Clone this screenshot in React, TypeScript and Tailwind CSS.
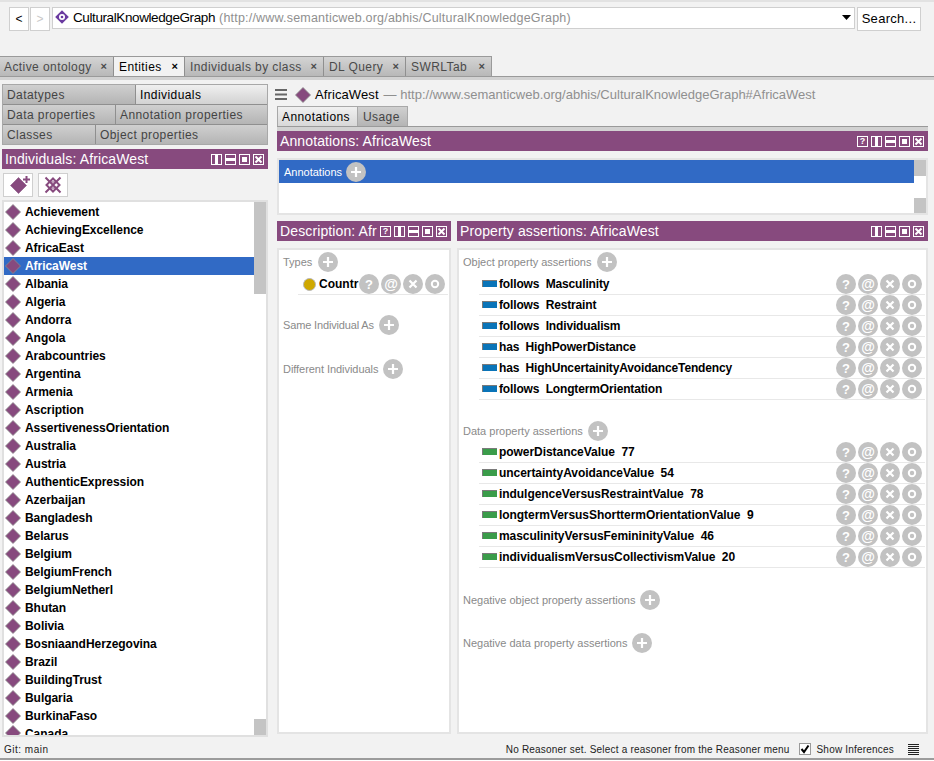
import React from "react";

const P = "#874a7e";

function Diamond({ size = 16, stroke = "#8c8c8c" }: { size?: number; stroke?: string }) {
  return (
    <svg width={size} height={size} viewBox="0 0 16 16" className="shrink-0">
      <path d="M8 .5 15.5 8 8 15.5 .5 8Z" fill={P} stroke={stroke} strokeWidth="0.8" />
    </svg>
  );
}

function WinIcons({ help = true }: { help?: boolean }) {
  const c = "w-[11px] h-[11px] border border-white shrink-0";
  return (
    <div className="flex items-center gap-[3px] shrink-0">
      {help && (
        <div className={c + " flex items-center justify-center text-white text-[9px] font-bold leading-none"}>?</div>
      )}
      <div className={c + " flex justify-center"}>
        <div className="w-[3px] h-full bg-white" />
      </div>
      <div className={c + " flex items-center"}>
        <div className="h-[3px] w-full bg-white" />
      </div>
      <div className={c + " flex items-center justify-center"}>
        <div className="w-[5px] h-[5px] bg-white" />
      </div>
      <div className={c + " flex items-center justify-center"}>
        <svg width="9" height="9" viewBox="0 0 9 9">
          <path d="M1.5 1.5 7.5 7.5M7.5 1.5 1.5 7.5" stroke="#fff" strokeWidth="2" />
        </svg>
      </div>
    </div>
  );
}

function ViewHeader({ title, help = true, className = "" }: { title: string; help?: boolean; className?: string }) {
  return (
    <div className={"h-[20px] bg-[#874a7e] flex items-center justify-between pl-[3px] pr-[4px] shrink-0 " + className}>
      <span className="text-white text-[14px] leading-none whitespace-nowrap tracking-[0.12px]">{title}</span>
      <WinIcons help={help} />
    </div>
  );
}

function Plus() {
  return (
    <div className="w-[20px] h-[20px] rounded-full bg-[#c2c2c2] flex items-center justify-center shrink-0">
      <svg width="12" height="12" viewBox="0 0 12 12">
        <path d="M6 1v10M1 6h10" stroke="#fff" strokeWidth="2.2" />
      </svg>
    </div>
  );
}

function Circle({ children }: { children: React.ReactNode }) {
  return (
    <div className="w-[20px] h-[20px] rounded-full bg-[#c2c2c2] flex items-center justify-center shrink-0 text-white font-bold text-[13px] leading-none">
      {children}
    </div>
  );
}

function Actions() {
  return (
    <div className="flex gap-[2px] shrink-0">
      <Circle>?</Circle>
      <Circle>
        <span className="text-[14px] font-bold">@</span>
      </Circle>
      <Circle>
        <svg width="10" height="10" viewBox="0 0 10 10">
          <path d="M1.5 1.5 8.5 8.5M8.5 1.5 1.5 8.5" stroke="#fff" strokeWidth="2.2" />
        </svg>
      </Circle>
      <Circle>
        <svg width="10" height="10" viewBox="0 0 10 10">
          <circle cx="5" cy="5" r="3.2" fill="none" stroke="#fff" strokeWidth="2" />
        </svg>
      </Circle>
    </div>
  );
}

function Label({
  text,
  className = "",
  textClass = "",
  gap = "gap-[5px]",
}: {
  text: string;
  className?: string;
  textClass?: string;
  gap?: string;
}) {
  return (
    <div className={"h-[20px] flex items-center pl-[4px] " + gap + " " + className}>
      <span className={"text-[11px] text-[#8a8a8a] whitespace-nowrap " + textClass}>{text}</span>
      <Plus />
    </div>
  );
}

function AssertRow({ color, parts, track }: { color: string; parts: string; track: string }) {
  return (
    <div className="h-[21px] ml-[20px] mr-[1px] border-b border-[#e8e8e8] flex items-center pl-[3px] pr-[3px]">
      <div
        className="w-[15px] h-[7px] -mt-[2px] border-l-[1px] border-t-[1px] border-[#7a7a7a] mr-[2px] shrink-0"
        style={{ backgroundColor: color }}
      />
      <span className={"flex-1 text-[12px] font-bold text-black whitespace-pre " + track}>{parts}</span>
      <Actions />
    </div>
  );
}

const tabs: [string, boolean, string][] = [
  ["Active ontology", false, "w-[114px]"],
  ["Entities", true, "w-[71px]"],
  ["Individuals by class", false, "w-[139px]"],
  ["DL Query", false, "w-[82px]"],
  ["SWRLTab", false, "w-[85px]"],
];

const names = [
  "Achievement", "AchievingExcellence", "AfricaEast", "AfricaWest", "Albania", "Algeria", "Andorra", "Angola",
  "Arabcountries", "Argentina", "Armenia", "Ascription", "AssertivenessOrientation", "Australia", "Austria",
  "AuthenticExpression", "Azerbaijan", "Bangladesh", "Belarus", "Belgium", "BelgiumFrench", "BelgiumNetherl",
  "Bhutan", "Bolivia", "BosniaandHerzegovina", "Brazil", "BuildingTrust", "Bulgaria", "BurkinaFaso",
];

const objs = [
  "follows  Masculinity", "follows  Restraint", "follows  Individualism", "has  HighPowerDistance",
  "has  HighUncertainityAvoidanceTendency", "follows  LongtermOrientation",
];
const datas = [
  "powerDistanceValue  77", "uncertaintyAvoidanceValue  54", "indulgenceVersusRestraintValue  78",
  "longtermVersusShorttermOrientationValue  9", "masculinityVersusFemininityValue  46",
  "individualismVersusCollectivismValue  20",
];

function SubTab({ text, active, className = "" }: { text: string; active?: boolean; className?: string }) {
  return (
    <div
      className={
        "h-full flex items-center pl-[4px] text-[12px] tracking-[0.42px] border-r border-[#8f8f8f] last:border-r-0 " +
        (active
          ? "bg-gradient-to-b from-[#f0f0f0] to-[#d2d2d2] text-black "
          : "bg-gradient-to-b from-[#d0d0d0] to-[#b4b4b4] text-[#444] ") +
        className
      }
    >
      {text}
    </div>
  );
}

export default function App() {
  return (
    <div
      className="w-[934px] h-[761px] bg-[#f2f2f2] overflow-hidden flex flex-col relative"
      style={{ fontFamily: '"Liberation Sans", Arial, sans-serif' }}
    >
      <div className="h-[2px] bg-[#e2e2e2] shrink-0" />
      {/* top bar */}
      <div className="h-[54px] shrink-0 pt-[5px] pl-[9px] pr-[13px] flex items-start">
        <div className="w-[20px] h-[24px] bg-white border border-[#cfcfcf] flex items-center justify-center text-[12px] text-black">&lt;</div>
        <div className="w-[20px] h-[24px] ml-[1px] bg-white border border-[#cfcfcf] flex items-center justify-center text-[12px] text-[#c8c8c8]">&gt;</div>
        <div className="ml-[2px] flex-1 h-[22px] bg-white border border-[#cfcfcf] flex items-center pl-[2px] pr-[1px]">
          <svg width="14" height="14" viewBox="0 0 14 14" className="mr-[4px] shrink-0 -mt-[2px]">
            <path d="M7 .2 13.8 7 7 13.8 .2 7Z" fill="#6a3aa0" />
            <circle cx="7" cy="7" r="3" fill="#fff" />
            <circle cx="7" cy="7" r="1.3" fill="#6a3aa0" />
          </svg>
          <span className="text-[13.5px] text-black whitespace-nowrap tracking-[-0.4px]">CulturalKnowledgeGraph</span>
          <span className="text-[12.5px] text-[#8f8f8f] whitespace-nowrap ml-[4px] tracking-[0.2px]">
            (http://www.semanticweb.org/abhis/CulturalKnowledgeGraph)
          </span>
          <svg width="9" height="5" viewBox="0 0 9 5" className="ml-auto mr-[2px] -mt-[2px]">
            <path d="M0 0h9L4.5 5Z" fill="#000" />
          </svg>
        </div>
        <div className="ml-[2px] w-[64px] h-[24px] bg-white border border-[#cfcfcf] flex items-center justify-center text-[13px] tracking-[0.3px] text-black">
          Search...
        </div>
      </div>
      {/* tabs */}
      <div className="h-[20px] shrink-0 flex items-stretch">
        <div className="flex items-stretch w-[492px] border-t border-r border-[#9a9a9a]">
          {tabs.map(([t, active, w]) => (
            <div
              key={t}
              className={
                "flex items-center justify-between pl-[5px] first:pl-[4px] pr-[6px] border-r border-[#8f8f8f] last:border-r-0 " +
                w +
                (active
                  ? " bg-[#f2f2f2] text-black"
                  : " bg-gradient-to-b from-[#d4d4d4] to-[#b8b8b8] text-[#4a4a4a]")
              }
            >
              <span className="text-[12px] tracking-[0.42px] whitespace-nowrap">{t}</span>
              <span className="text-[11px] font-bold leading-none">×</span>
            </div>
          ))}
        </div>
      </div>
      <div className="h-[4px] shrink-0 bg-[#d2d2d2] border-t border-[#9a9a9a]" />
      {/* main */}
      <div className="flex flex-1 min-h-0 pl-[2px]">
        {/* left */}
        <div className="w-[266px] shrink-0 pt-[4px] flex flex-col">
          <div className="border border-[#a8a8a8] flex flex-col h-[61px] shrink-0">
            <div className="flex h-[20px] border-b border-[#8f8f8f]">
              <SubTab text="Datatypes" className="w-[133px]" />
              <SubTab text="Individuals" active className="flex-1" />
            </div>
            <div className="flex h-[20px] border-b border-[#8f8f8f]">
              <SubTab text="Data properties" className="w-[113px]" />
              <SubTab text="Annotation properties" className="flex-1" />
            </div>
            <div className="flex flex-1">
              <SubTab text="Classes" className="w-[93px]" />
              <SubTab text="Object properties" className="flex-1" />
            </div>
          </div>
          <ViewHeader title="Individuals: AfricaWest" help={false} className="mt-[4px]" />
          <div className="h-[31px] shrink-0 flex items-start pt-[4px] pl-[1px] gap-[5px]">
            <div className="w-[30px] h-[24px] bg-white border border-[#cfcfcf] flex items-center justify-center relative">
              <Diamond size={17} stroke="#9a6a93" />
              <svg width="7" height="7" viewBox="0 0 7 7" className="absolute right-[2px] top-[2px]">
                <path d="M3.5 0v7M0 3.5h7" stroke="#874a7e" strokeWidth="2" />
              </svg>
            </div>
            <div className="w-[30px] h-[24px] bg-white border border-[#cfcfcf] flex items-center justify-center">
              <svg width="20" height="20" viewBox="0 0 20 20">
                <path d="M10 3.5 16.5 10 10 16.5 3.5 10Z" fill="#fff" stroke="#874a7e" strokeWidth="2" />
                <path d="M2.5 2.5 17.5 17.5M17.5 2.5 2.5 17.5" stroke="#874a7e" strokeWidth="2" />
                <path d="M7 7H13M7 13H13" stroke="#874a7e" strokeWidth="1" />
              </svg>
            </div>
          </div>
          <div className="h-[537px] shrink-0 bg-white border-2 border-[#e0e0e0] relative overflow-hidden pt-[1px] pr-[12px]">
            {names.map((n) => {
              const sel = n === "AfricaWest";
              return (
                <div
                  key={n}
                  className={
                    "h-[18px] flex items-center pl-[1px] whitespace-nowrap " + (sel ? "bg-[#316ac5] text-white" : "text-black")
                  }
                >
                  <Diamond size={16} />
                  <span className="ml-[4px] text-[12px] font-bold tracking-[-0.05px]">{n}</span>
                </div>
              );
            })}
            <div className="h-[14px] overflow-hidden flex items-start pl-[1px]">
              <Diamond size={16} />
              <span className="ml-[4px] text-[12px] font-bold leading-[18px] tracking-[-0.05px] text-black">Canada</span>
            </div>
            <div className="absolute right-0 top-0 w-[12px] h-[92px] bg-[#c4c4c4]" />
            <div className="absolute right-0 bottom-0 w-[12px] h-[16px] bg-[#c4c4c4]" />
          </div>
        </div>
        {/* right */}
        <div className="ml-[9px] w-[651px] shrink-0 flex flex-col">
          <div className="h-[26px] shrink-0 flex items-center -ml-[2px] pt-[3px]">
            <svg width="12" height="11" viewBox="0 0 12 11" className="shrink-0">
              <path d="M0 1h12M0 5.5h12M0 10h12" stroke="#666" strokeWidth="2" />
            </svg>
            <div className="ml-[8px]">
              <Diamond size={16} />
            </div>
            <span className="ml-[4px] text-[13px] text-black tracking-[0.1px]">AfricaWest</span>
            <span className="ml-[5px] text-[13px] text-[#8f8f8f] whitespace-nowrap">
              — http://www.semanticweb.org/abhis/CulturalKnowledgeGraph#AfricaWest
            </span>
          </div>
          <div className="h-[20px] shrink-0 flex">
            <div className="w-[81px] border border-[#a8a8a8] border-b-0 bg-gradient-to-b from-[#f0f0f0] to-[#d8d8d8] flex items-center pl-[4px] text-[12px] tracking-[0.42px] text-black">
              Annotations
            </div>
            <div className="w-[50px] border border-l-0 border-[#a8a8a8] border-b-0 bg-gradient-to-b from-[#d0d0d0] to-[#b4b4b4] flex items-center pl-[5px] text-[12px] tracking-[0.42px] text-[#444]">
              Usage
            </div>
          </div>
          <div className="h-[5px] shrink-0 border-t border-[#9a9a9a] bg-[#d2d2d2]" />
          <ViewHeader title="Annotations: AfricaWest" />
          <div className="mt-[7px] h-[57px] shrink-0 bg-white border-2 border-[#e4e4e4] relative pr-[12px]">
            <div className="h-[23px] bg-[#316ac5] flex items-center pl-[5px] gap-[4px]">
              <span className="text-[11px] text-white pt-[1px]">Annotations</span>
              <Plus />
            </div>
            <div className="absolute right-0 top-0 w-[12px] h-[16px] bg-[#c4c4c4]" />
            <div className="absolute right-0 bottom-0 w-[12px] h-[15px] bg-[#c4c4c4]" />
          </div>
          <div className="mt-[6px] flex gap-[6px] flex-1 min-h-0">
            <div className="w-[174px] shrink-0 flex flex-col">
              <ViewHeader title="Description: Afr" />
              <div className="mt-[7px] h-[486px] shrink-0 bg-white border-2 border-[#e4e4e4] pt-[2px]">
                <Label text="Types" gap="gap-[6px]" />
                <div className="h-[21px] mt-[2px] ml-[19px] mr-[1px] border-b border-[#e8e8e8] flex items-center">
                  <span className="w-[13px] h-[13px] rounded-full bg-[#cfa800] border border-[#b8b8b8] ml-[5px] mr-[3px] shrink-0" />
                  <span className="text-[12px] font-bold text-black w-[40px] whitespace-nowrap">Countr</span>
                  <Actions />
                </div>
                <Label text="Same Individual As" className="mt-[20px]" textClass="tracking-[-0.15px]" />
                <Label text="Different Individuals" className="mt-[24px]" textClass="tracking-[-0.05px]" />
              </div>
            </div>
            <div className="flex-1 flex flex-col">
              <ViewHeader title="Property assertions: AfricaWest" help={false} />
              <div className="mt-[7px] h-[486px] shrink-0 bg-white border-2 border-[#e4e4e4] pt-[2px]">
                <Label text="Object property assertions" gap="gap-[6px]" />
                <div className="mt-[2px]">
                  {objs.map((o) => (
                    <AssertRow key={o} color="#0a74b8" parts={o} track="tracking-[-0.15px]" />
                  ))}
                </div>
                <Label text="Data property assertions" className="mt-[21px]" />
                <div className="mt-[1px]">
                  {datas.map((o) => (
                    <AssertRow key={o} color="#3a9c4a" parts={o} track="tracking-[-0.05px]" />
                  ))}
                </div>
                <Label text="Negative object property assertions" className="mt-[22px]" />
                <Label text="Negative data property assertions" className="mt-[23px]" />
              </div>
            </div>
          </div>
        </div>
      </div>
      {/* status */}
      <div className="h-[22px] shrink-0 flex items-center pt-[2px] pl-[4px] pr-[15px] text-[10px] text-[#222] tracking-[0.2px] border-b-2 border-[#9c9c9c]">
        <span className="tracking-[0.5px]">Git: main</span>
        <span className="ml-auto">No Reasoner set. Select a reasoner from the Reasoner menu</span>
        <div className="ml-[9px] w-[12px] h-[12px] bg-white border border-[#9a9a9a] flex items-center justify-center">
          <svg width="10" height="10" viewBox="0 0 10 10">
            <path d="M1.5 5 4 8 8.5 1.5" fill="none" stroke="#000" strokeWidth="2" />
          </svg>
        </div>
        <span className="ml-[6px]">Show Inferences</span>
        <svg width="11" height="11" viewBox="0 0 11 11" className="ml-[14px]">
          <path d="M0 .5h11M0 2.5h11M0 4.5h11M0 6.5h11M0 8.5h11M0 10.5h11" stroke="#222" strokeWidth="1" />
        </svg>
      </div>
      <div className="h-[1px] bg-white shrink-0" />
    </div>
  );
}
